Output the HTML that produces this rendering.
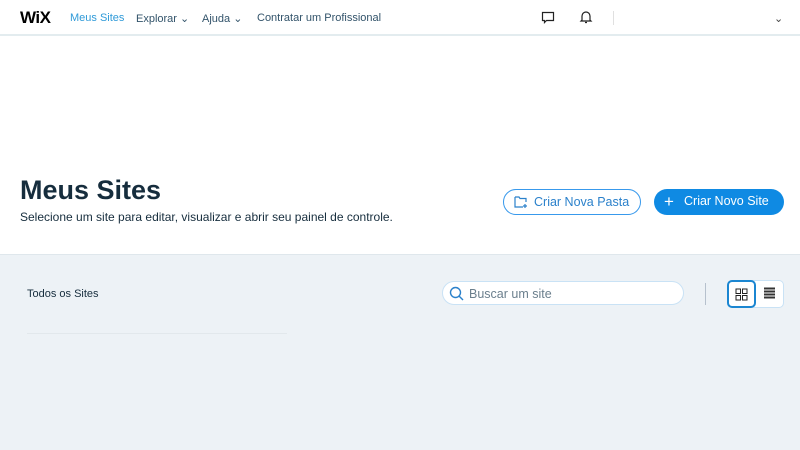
<!DOCTYPE html>
<html><head><meta charset="utf-8"><style>
*{margin:0;padding:0;box-sizing:border-box}
body{width:800px;height:450px;overflow:hidden;font-family:"Liberation Sans",sans-serif;background:#fff;position:relative;color:#162d3d}
.top{position:absolute;left:0;top:0;width:800px;height:36px;border-bottom:2px solid #e3ecef;background:#fff}
.t{position:absolute;top:12px;font-size:11px;color:#32536a}
.logo{position:absolute;left:20px;top:8px;font-size:17px;font-weight:bold;color:#000;letter-spacing:-0.5px}
.gray{position:absolute;left:0;top:254px;width:800px;height:196px;background:#edf2f6;border-top:1px solid #dfe7ec}
h1{position:absolute;left:20px;top:175px;font-size:27px;font-weight:bold;color:#162d3d}
.sub{position:absolute;left:20px;top:210px;font-size:12px;color:#162d3d}
.b1{position:absolute;left:503px;top:189px;width:138px;height:26px;border:1px solid #3899ec;border-radius:14px;color:#2b81cb;font-size:12.5px;background:#fff}
.b2{position:absolute;left:654px;top:189px;width:130px;height:26px;border-radius:14px;background:#0f8ae3;color:#fff;font-size:12.5px}
.search{position:absolute;left:442px;top:281px;width:242px;height:24px;border:1px solid #c9e2f5;border-radius:13px;background:#fff;font-size:12.5px;color:#6b7f8d}
</style></head><body>
<div class="top">
<div class="logo">WiX</div>
<div class="t" style="left:70px;color:#2f9ad8">Meus Sites</div>
<div class="t" style="left:136px">Explorar ⌄</div>
<div class="t" style="left:202px">Ajuda ⌄</div>
<div class="t" style="left:257px">Contratar um Profissional</div>
<svg style="position:absolute;left:541px;top:11px" width="14" height="13" viewBox="0 0 14 13"><path d="M1.5 1.5h11v8h-7l-2 2v-2h-2z" fill="none" stroke="#222" stroke-width="1.2"/></svg>
<svg style="position:absolute;left:579px;top:10px" width="14" height="14" viewBox="0 0 14 14"><path d="M3 10V6a4 4 0 0 1 8 0v4l1 1H2zM6 12.5h2" fill="none" stroke="#222" stroke-width="1.2"/></svg>
<div style="position:absolute;left:613px;top:11px;width:1px;height:14px;background:#e0e0e0"></div>
<div class="t" style="left:774px;color:#444">⌄</div>
</div>
<h1>Meus Sites</h1>
<div class="sub">Selecione um site para editar, visualizar e abrir seu painel de controle.</div>
<div class="b1"><svg style="position:absolute;left:10px;top:5px" width="15" height="14" viewBox="0 0 15 14"><path d="M1 2h4l1 1.5h6V7M1 2v10h8M11 9v4M9 11h4" fill="none" stroke="#2b81cb" stroke-width="1.2"/></svg><span style="position:absolute;left:30px;top:5px">Criar Nova Pasta</span></div>
<div class="b2"><span style="position:absolute;left:10px;top:3px;font-size:17px;font-weight:300">+</span><span style="position:absolute;left:30px;top:5px">Criar Novo Site</span></div>
<div class="gray">
<div style="position:absolute;left:27px;top:33px;font-size:11px;color:#162d3d">Todos os Sites</div>
<div style="position:absolute;left:27px;top:78px;width:260px;height:1px;background:#e2e8ec"></div>
<div style="position:absolute;left:705px;top:28px;width:1px;height:22px;background:#b6c1cd"></div>
<div style="position:absolute;left:727px;top:25px;width:57px;height:28px;border:1px solid #c9e2f5;border-radius:5px;background:#fff"></div>
<div style="position:absolute;left:727px;top:25px;width:29px;height:28px;border:2px solid #1b86d1;border-radius:5px;background:#fff">
<svg style="position:absolute;left:6px;top:6px" width="13" height="13" viewBox="0 0 13 13"><rect x="1" y="1" width="4.5" height="4.5" fill="none" stroke="#222"/><rect x="7.5" y="1" width="4.5" height="4.5" fill="none" stroke="#222"/><rect x="1" y="7.5" width="4.5" height="4.5" fill="none" stroke="#222"/><rect x="7.5" y="7.5" width="4.5" height="4.5" fill="none" stroke="#222"/></svg></div>
<svg style="position:absolute;left:763px;top:32px" width="13" height="13" viewBox="0 0 13 13"><path d="M1 1.5h11M1 4.5h11M1 7.5h11M1 10.5h11" stroke="#333" stroke-width="2"/></svg>
</div>
<div class="search"><svg style="position:absolute;left:6px;top:4px" width="15" height="15" viewBox="0 0 15 15"><circle cx="6.5" cy="6.5" r="5" fill="none" stroke="#2b81cb" stroke-width="1.4"/><path d="M10 10l4 4" stroke="#2b81cb" stroke-width="1.4"/></svg><span style="position:absolute;left:26px;top:5px">Buscar um site</span></div>
</body></html>
